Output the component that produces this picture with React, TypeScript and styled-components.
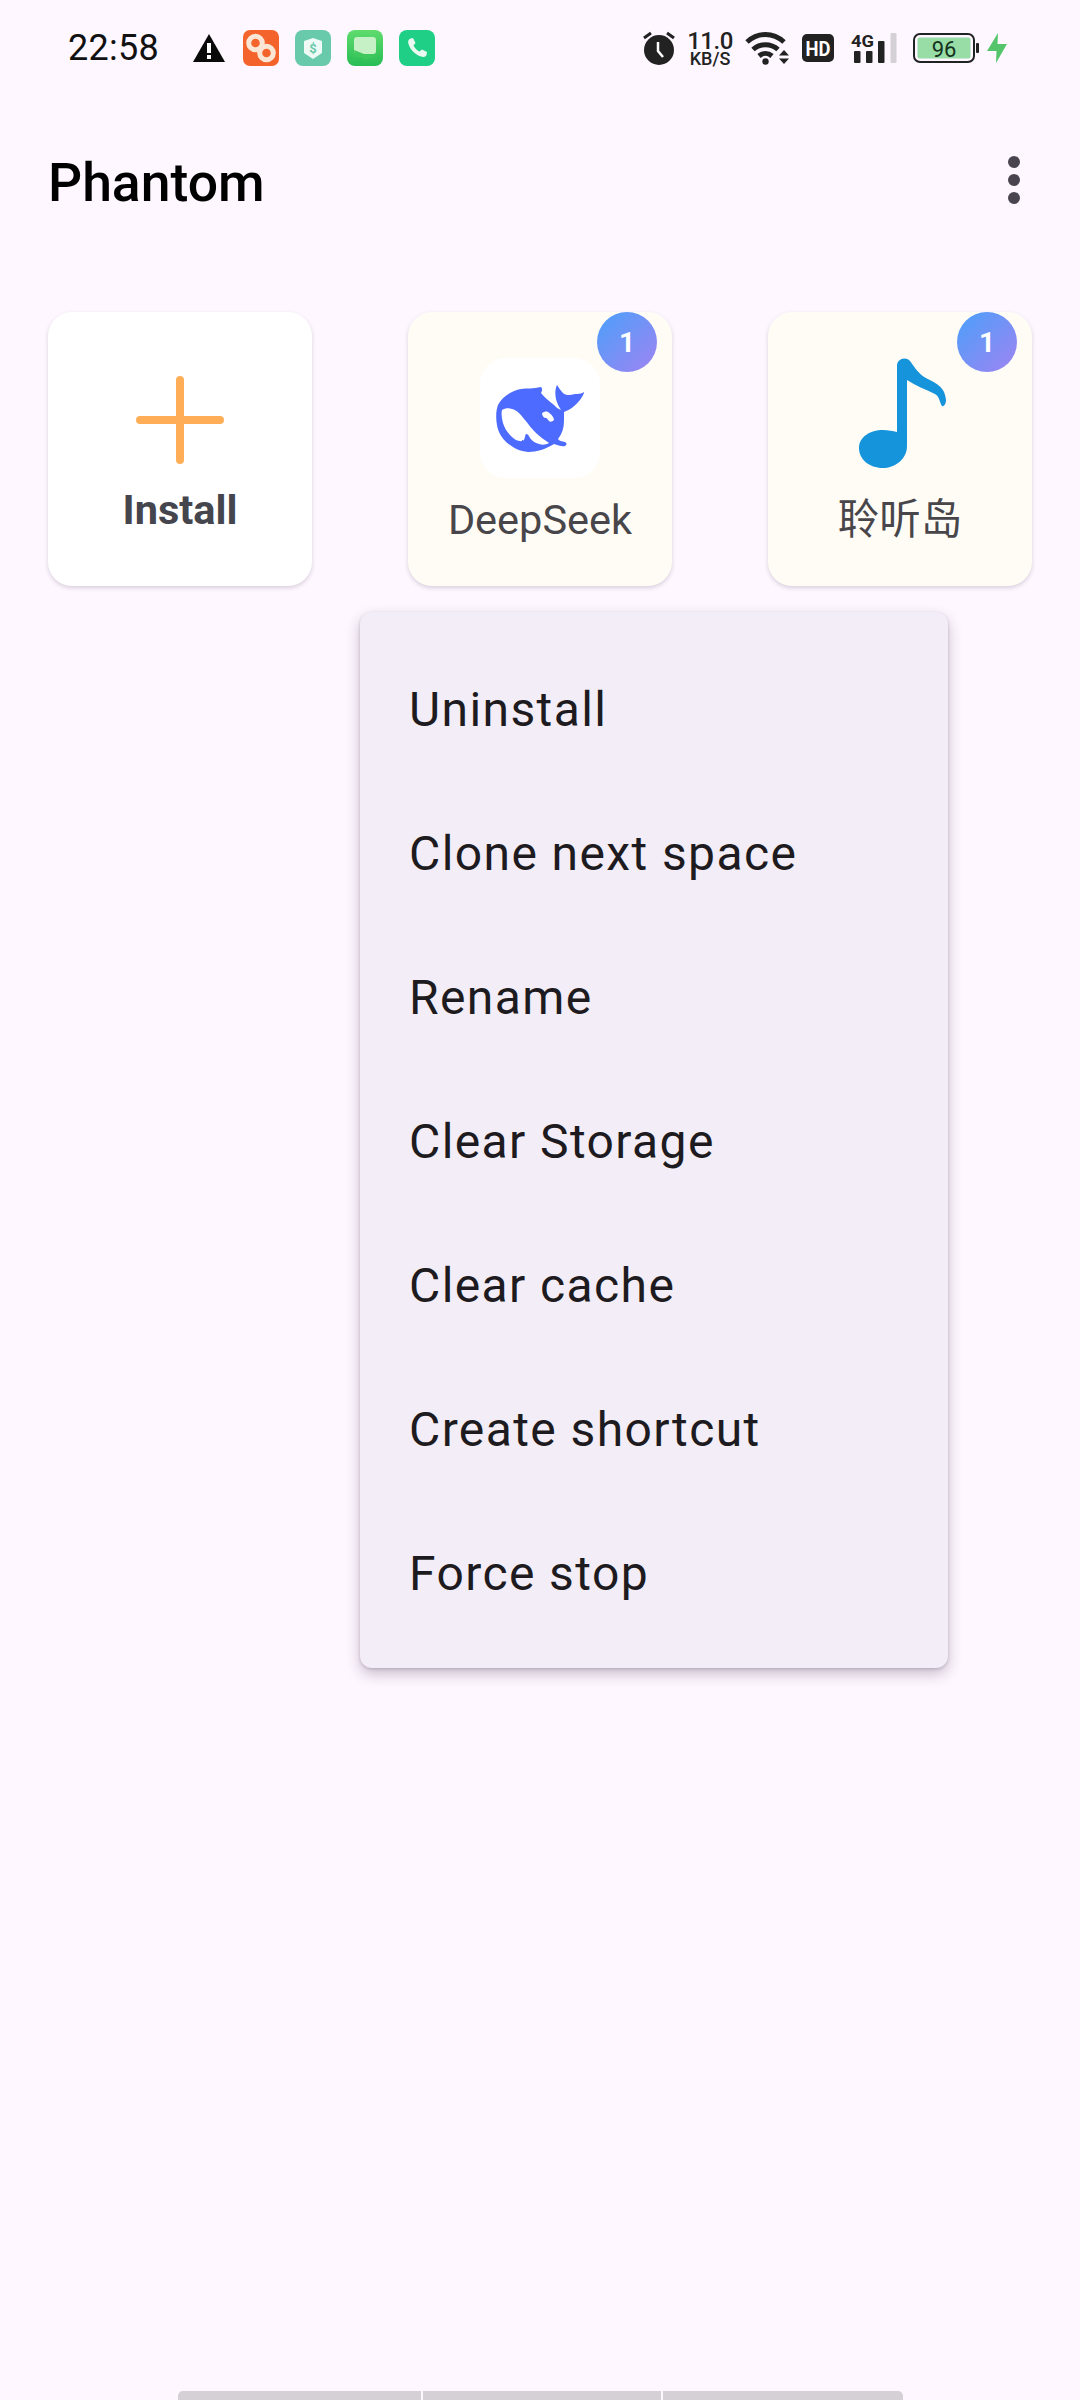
import React from 'react';
import styled, { createGlobalStyle } from 'styled-components';

const Global = createGlobalStyle`
  html, body { margin: 0; padding: 0; background: #fef7ff; }
  * { box-sizing: border-box; }
`;
const Screen = styled.div`
  position: relative; width: 1080px; height: 2400px; background: #fef7ff; overflow: hidden;
  display: flex; flex-direction: column;
  font-family: Roboto, "Noto Sans CJK SC", sans-serif;
`;
const StatusBar = styled.div`
  height: 96px; padding: 0 73px 0 68px; display: flex; align-items: center; justify-content: space-between;
`;
const StatusGroup = styled.div`
  display: flex; align-items: center;
`;
const Time = styled.span`
  font-size: 36px; color: #111; width: 125px; line-height: 96px; letter-spacing: 0.3px;
`;
const NotifIcons = styled.div`
  display: flex; align-items: center; gap: 16px; margin-left: 18px;
`;
const Slot = styled.span<{ $gap?: number }>`
  display: flex; margin-left: ${p => p.$gap ?? 0}px;
`;
const Speed = styled.div`
  display: flex; flex-direction: column; align-items: center; margin-left: 14px; width: 42px; color: #222; font-weight: 500;
`;
const SpeedNum = styled.span`
  font-size: 24px; line-height: 20px; letter-spacing: -0.5px;
`;
const SpeedUnit = styled.span`
  font-size: 18px; line-height: 15px; white-space: nowrap;
`;
const Header = styled.div`
  height: 172px; padding: 0 48px; display: flex; justify-content: space-between; align-items: flex-start;
`;
const Title = styled.h1`
  margin: 57px 0 0; font-size: 53.5px; line-height: 60px; font-weight: 500; color: #000;
`;
const More = styled.div`
  margin: 60px 12px 0 0; display: flex; flex-direction: column; gap: 6px; width: 12px;
`;
const Dot = styled.i`
  display: block; width: 12px; height: 12px; border-radius: 50%; background: #49454f;
`;
const Row = styled.div`
  padding: 0 48px; margin-top: 44px; display: flex; justify-content: space-between;
`;
const Card = styled.div<{ $white?: boolean }>`
  position: relative; width: 264px; height: 274px; border-radius: 24px;
  background: ${p => (p.$white ? '#fff' : '#fffcf6')};
  box-shadow: 0 2px 4px rgba(70, 50, 80, 0.2);
  display: flex; flex-direction: column; align-items: center;
`;
const IconArea = styled.div<{ $pad: number; $left?: number }>`
  height: 184px; width: 100%; display: flex; align-items: center; justify-content: center;
  padding-top: ${p => p.$pad}px; padding-left: ${p => p.$left ?? 0}px;
`;
const LogoTile = styled.div`
  width: 120px; height: 120px; border-radius: 26px; background: #fff; display: flex; align-items: center; justify-content: center;
`;
const CardLabel = styled.span<{ $bold?: boolean }>`
  font-size: 41.5px; line-height: 48px; color: ${p => (p.$bold ? '#45454d' : '#48464a')}; font-weight: ${p => (p.$bold ? 700 : 400)};
  margin-top: ${p => (p.$bold ? -10 : 0)}px;
`;
const Badge = styled.div`
  position: absolute; top: 0; right: 15px; width: 60px; height: 60px; border-radius: 50%;
  background: linear-gradient(135deg, #4aa0fa, #a083f2);
  color: #fff; font-size: 28px; font-weight: 700; display: flex; align-items: center; justify-content: center;
`;
const Menu = styled.div`
  position: absolute; left: 360px; top: 612px; width: 588px; border-radius: 12px; padding: 24px 0;
  background: #f3edf7; box-shadow: 0 6px 14px rgba(60, 40, 70, 0.28), 0 1px 3px rgba(60, 40, 70, 0.2);
`;
const MenuItem = styled.div`
  height: 144px; padding: 2px 49px 0; display: flex; align-items: center;
  font-size: 48px; letter-spacing: 1.4px; color: #1d1b20;
`;
const NavBar = styled.div`
  margin-top: auto; margin-left: 178px; width: 725px; height: 9px; display: flex; gap: 2px;
`;
const NavPiece = styled.div<{ $w: number; $pos: string }>`
  width: ${p => p.$w}px; background: #d5cfd6;
  border-top-left-radius: ${p => (p.$pos === 'start' ? 5 : 0)}px;
  border-top-right-radius: ${p => (p.$pos === 'end' ? 5 : 0)}px;
`;

const Warning = () => (
  <svg width="32" height="28" viewBox="0 0 32 28"><path d="M16 0 L32 28 H0 Z" fill="#0a0a0a" /><rect x="14" y="9" width="4" height="10" fill="#fff" /><rect x="14" y="21" width="4" height="4" fill="#fff" /></svg>
);
const LinkApp = () => (
  <svg width="36" height="36" viewBox="0 0 36 36">
    <rect width="36" height="36" rx="7" fill="#f4632b" />
    <circle cx="12.5" cy="13" r="6.8" fill="none" stroke="#fbe6d6" strokeWidth="5" />
    <circle cx="23.5" cy="23" r="6.8" fill="none" stroke="#fbe6d6" strokeWidth="5" />
  </svg>
);
const ShieldApp = () => (
  <svg width="36" height="36" viewBox="0 0 36 36">
    <rect width="36" height="36" rx="8" fill="#68c9ab" />
    <path d="M18 8 L27 11 V23 L18 29 L9 23 V11 Z" fill="#eefaf5" strokeLinejoin="round" />
    <text x="18" y="23" textAnchor="middle" fontSize="13" fontWeight="700" fill="#68c9ab" fontFamily="Roboto">$</text>
  </svg>
);
const MessageApp = () => (
  <svg width="36" height="36" viewBox="0 0 36 36">
    <defs><linearGradient id="mg" x1="0" y1="0" x2="0" y2="1"><stop offset="0" stopColor="#5fdc6e" /><stop offset="1" stopColor="#28bd54" /></linearGradient></defs>
    <rect width="36" height="36" rx="8" fill="url(#mg)" />
    <path d="M10 7 H26 a3 3 0 0 1 3 3 V21 a3 3 0 0 1 -3 3 H10 a3 3 0 0 1 -3 -3 V10 a3 3 0 0 1 3 -3 Z" fill="#c6f0c6" />
    <path d="M7 20 L17 24 H29 L27 27 L18 30 L15 27 H8 Z" fill="#3fc85d" />
  </svg>
);
const PhoneApp = () => (
  <svg width="36" height="36" viewBox="0 0 36 36">
    <rect width="36" height="36" rx="8" fill="#1fcf86" />
    <path d="M11.5 8.5 L14 8 L16.5 13 L14.5 15.5 C15.5 18 18 20.5 20.5 21.5 L23 19.5 L28 22 L27.5 25 C27 27 24.5 27.5 22 26.5 C16 24.5 11.5 20 9.5 14 C8.5 11.5 9.5 9 11.5 8.5 Z" fill="#eafaf3" />
  </svg>
);
const Alarm = () => (
  <svg width="32" height="34" viewBox="0 0 32 34">
    <circle cx="16" cy="19" r="15" fill="#222" />
    <path d="M1 7 L8 2 M31 7 L24 2" stroke="#222" strokeWidth="3" />
    <path d="M15 11 V20 L20 26" stroke="#fff" strokeWidth="2.5" fill="none" />
  </svg>
);
const Wifi = () => (
  <svg width="46" height="34" viewBox="0 0 46 34">
    <path d="M2 11 C13 1 28 1 39 11" stroke="#222" strokeWidth="5" fill="none" />
    <path d="M8 18.5 C15 12 26 12 33 18.5" stroke="#222" strokeWidth="5" fill="none" />
    <path d="M14 25 C18 21.5 23 21.5 27 25" stroke="#222" strokeWidth="5" fill="none" />
    <circle cx="20.5" cy="30.5" r="3.2" fill="#222" />
    <path d="M34 24.5 L39 19 L44 24.5 Z M34 27.5 H44 L39 33 Z" fill="#222" />
  </svg>
);
const HD = () => (
  <svg width="32" height="28" viewBox="0 0 32 28">
    <rect width="32" height="28" rx="5" fill="#222" />
    <text x="16" y="21.5" textAnchor="middle" fontSize="21" fontWeight="700" fill="#fff" fontFamily="Roboto" textLength="25" lengthAdjust="spacingAndGlyphs">HD</text>
  </svg>
);
const Signal = () => (
  <svg width="46" height="32" viewBox="0 0 46 32" overflow="visible">
    <text x="0" y="15" fontSize="17" fontWeight="700" fill="#222" fontFamily="Roboto" textLength="23" lengthAdjust="spacingAndGlyphs">4G</text>
    <rect x="3" y="19" width="6.5" height="12" rx="1" fill="#222" />
    <rect x="15" y="19" width="6.5" height="12" rx="1" fill="#222" />
    <rect x="27" y="9" width="6.5" height="22" rx="1" fill="#222" />
    <rect x="39.5" y="1" width="6" height="30" rx="1" fill="#d5d0d6" />
  </svg>
);
const Battery = () => (
  <svg width="66" height="30" viewBox="0 0 66 30">
    <rect x="1" y="1" width="60" height="28" rx="6" fill="none" stroke="#222" strokeWidth="2" />
    <rect x="4.5" y="4.5" width="53" height="21" rx="2" fill="#98dca6" />
    <rect x="63" y="10" width="3" height="10" rx="1" fill="#222" />
    <text x="31" y="23.5" textAnchor="middle" fontSize="22" fill="#14331d" fontFamily="Roboto">96</text>
  </svg>
);
const Bolt = () => (
  <svg width="20" height="30" viewBox="0 0 20 30"><path d="M11 0 L10.5 11 H20 L9 30 L9.5 18 H0 Z" fill="#55c56b" /></svg>
);
const Plus = () => (
  <svg width="88" height="88" viewBox="0 0 88 88">
    <path d="M44 4 V84 M4 44 H84" stroke="#ffad57" strokeWidth="8" strokeLinecap="round" />
  </svg>
);
const Whale = () => (
  <svg width="89" height="67" viewBox="0 0 89 67">
    <path fillRule="evenodd" fill="#4d6bfe" d="M45 2 C37 4 31 3 25 4 C15 6 6 12 2 20 C-1 28 0 40 3 47 C7 56 18 66 32 67 C41 67 50 64 58 59 C62 60 66 62 69 61 C71 60 71 58 69 57 C66 56 63 56 62 54 C66 49 68 43 68 36 C68 32 68 29 68 27 C74 25 80 20 84 15 C86 12 88 9 88 7 C85 9 82 9 79 9 C75 10 70 11 67 8 C65 6 63 3 61 0 C59 4 59 10 60 14 C61 18 63 22 65 25 C62 24 60 22 58 20 C53 16 48 12 45 8 C46 6 47 4 45 2 Z M6 25 C9 23 13 23 16 24 C21 25 25 30 29 35 C33 40 36 44 40 48 C44 52 49 55 53 58 C50 60 46 60 43 59 C39 58 36 56 34 53 C33 51 32 49 30 49 C29 50 29 53 28 55 C26 57 23 56 20 55 C14 51 9 45 7 38 C6 34 5 29 6 25 Z M46 28 C48 27 50 26 52 27 C55 29 58 32 58 35 C56 37 54 37 53 36 C52 35 51 33 50 33 C48 33 46 31 46 28 Z" />
  </svg>
);
const Note = () => (
  <svg width="88" height="110" viewBox="0 0 88 110">
    <path fill="#1694db" d="M38 8 C38 1 46 -2 51 3 C56 10 60 16 67 20 C76 25 86 28 87 42 C87 47 84 49 83 48 C81 46 81 39 76 36 C66 31 57 28 48 22 L48 88 C48 102 35 110 24 110 C10 110 0 101 0 90 C0 79 11 72 24 72 C29 72 34 73 38 74 Z" />
  </svg>
);

const items = ['Uninstall', 'Clone next space', 'Rename', 'Clear Storage', 'Clear cache', 'Create shortcut', 'Force stop'];

export default function App() {
  return (
    <Screen>
      <Global />
      <StatusBar>
        <StatusGroup>
          <Time>22:58</Time>
          <Slot><Warning /></Slot>
          <NotifIcons>
            <LinkApp /><ShieldApp /><MessageApp /><PhoneApp />
          </NotifIcons>
        </StatusGroup>
        <StatusGroup>
          <Slot><Alarm /></Slot>
          <Speed><SpeedNum>11.0</SpeedNum><SpeedUnit>KB/S</SpeedUnit></Speed>
          <Slot $gap={14}><Wifi /></Slot>
          <Slot $gap={11}><HD /></Slot>
          <Slot $gap={17}><Signal /></Slot>
          <Slot $gap={16}><Battery /></Slot>
          <Slot $gap={8}><Bolt /></Slot>
        </StatusGroup>
      </StatusBar>
      <Header>
        <Title>Phantom</Title>
        <More><Dot /><Dot /><Dot /></More>
      </Header>
      <Row>
        <Card $white>
          <IconArea $pad={32}><Plus /></IconArea>
          <CardLabel $bold>Install</CardLabel>
        </Card>
        <Card>
          <IconArea $pad={28}><LogoTile><Whale /></LogoTile></IconArea>
          <CardLabel>DeepSeek</CardLabel>
          <Badge>1</Badge>
        </Card>
        <Card>
          <IconArea $pad={18} $left={6}><Note /></IconArea>
          <CardLabel>聆听岛</CardLabel>
          <Badge>1</Badge>
        </Card>
      </Row>
      <Menu>
        {items.map(i => <MenuItem key={i}>{i}</MenuItem>)}
      </Menu>
      <NavBar>
        <NavPiece $w={243} $pos="start" />
        <NavPiece $w={238} $pos="mid" />
        <NavPiece $w={240} $pos="end" />
      </NavBar>
    </Screen>
  );
}
